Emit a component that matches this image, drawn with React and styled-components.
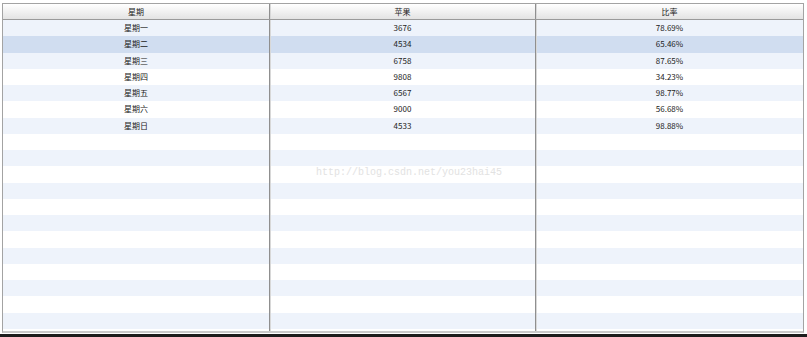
import styled, { createGlobalStyle } from "styled-components";

const GlobalStyle = createGlobalStyle`
  html, body {
    margin: 0;
    padding: 0;
    background: #fff;
  }
  body {
    font-family: "Noto Sans CJK SC", "Noto Sans", sans-serif;
  }
`;

const Page = styled.div`
  width: 807px;
  height: 337px;
  overflow: hidden;
  position: relative;
  display: flex;
  flex-direction: column;
  padding: 3px 0 0 2px;
  box-sizing: border-box;
`;

const Grid = styled.div`
  width: 802px;
  border: 1px solid #a3a3a3;
  border-bottom: 2px solid #c9c9c9;
  box-sizing: border-box;
`;

const HeadRow = styled.div`
  display: grid;
  grid-template-columns: 267px 266px 1fr;
  height: 16px;
  background: linear-gradient(#ffffff, #f4f4f4 40%, #e3e3e3);
  border-bottom: 1px solid #9a9a9a;
  box-sizing: border-box;
`;

const HeadCell = styled.div`
  display: flex;
  align-items: center;
  justify-content: center;
  font-size: 8px;
  color: #222;
  border-right: ${(p) => (p.$last ? "none" : "1px solid #8f8f8f")};
  box-shadow: ${(p) => (p.$last ? "none" : "1px 0 0 #d8d8d8")};
`;

const Body = styled.div`
  height: 311px;
  overflow: hidden;
`;

const Row = styled.div`
  display: grid;
  grid-template-columns: 267px 266px 1fr;
  height: 16.25px;
  background: ${(p) => (p.$selected ? "#d0ddf0" : p.$odd ? "#eef3fb" : "#ffffff")};
`;

const Cell = styled.div`
  display: flex;
  align-items: center;
  justify-content: center;
  padding-bottom: 1px;
  font-size: 8px;
  color: #222;
  border-right: ${(p) => (p.$last ? "none" : "1px solid #8f8f8f")};
  box-shadow: ${(p) => (p.$last ? "none" : "1px 0 0 #d8d8d8")};
`;

const Watermark = styled.div`
  position: absolute;
  left: 316px;
  top: 167px;
  font-family: "Liberation Mono", "DejaVu Sans Mono", monospace;
  font-size: 10px;
  color: #e2e2e2;
  pointer-events: none;
`;

const BottomBar = styled.div`
  position: absolute;
  left: 0;
  right: 0;
  bottom: 0;
  height: 3px;
  background: #1c1c1c;
`;

const data = [
  ["星期一", "3676", "78.69%"],
  ["星期二", "4534", "65.46%"],
  ["星期三", "6758", "87.65%"],
  ["星期四", "9808", "34.23%"],
  ["星期五", "6567", "98.77%"],
  ["星期六", "9000", "56.68%"],
  ["星期日", "4533", "98.88%"],
];

export default function App() {
  const rows = Array.from({ length: 20 }, (_, i) => data[i] || ["", "", ""]);
  return (
    <>
      <GlobalStyle />
      <Page>
        <Grid>
          <HeadRow>
            <HeadCell>星期</HeadCell>
            <HeadCell>苹果</HeadCell>
            <HeadCell $last>比率</HeadCell>
          </HeadRow>
          <Body>
            {rows.map((r, i) => (
              <Row key={i} $odd={i % 2 === 0} $selected={i === 1}>
                <Cell>{r[0]}</Cell>
                <Cell>{r[1]}</Cell>
                <Cell $last>{r[2]}</Cell>
              </Row>
            ))}
          </Body>
        </Grid>
        <Watermark>http://blog.csdn.net/you23hai45</Watermark>
        <BottomBar />
      </Page>
    </>
  );
}
